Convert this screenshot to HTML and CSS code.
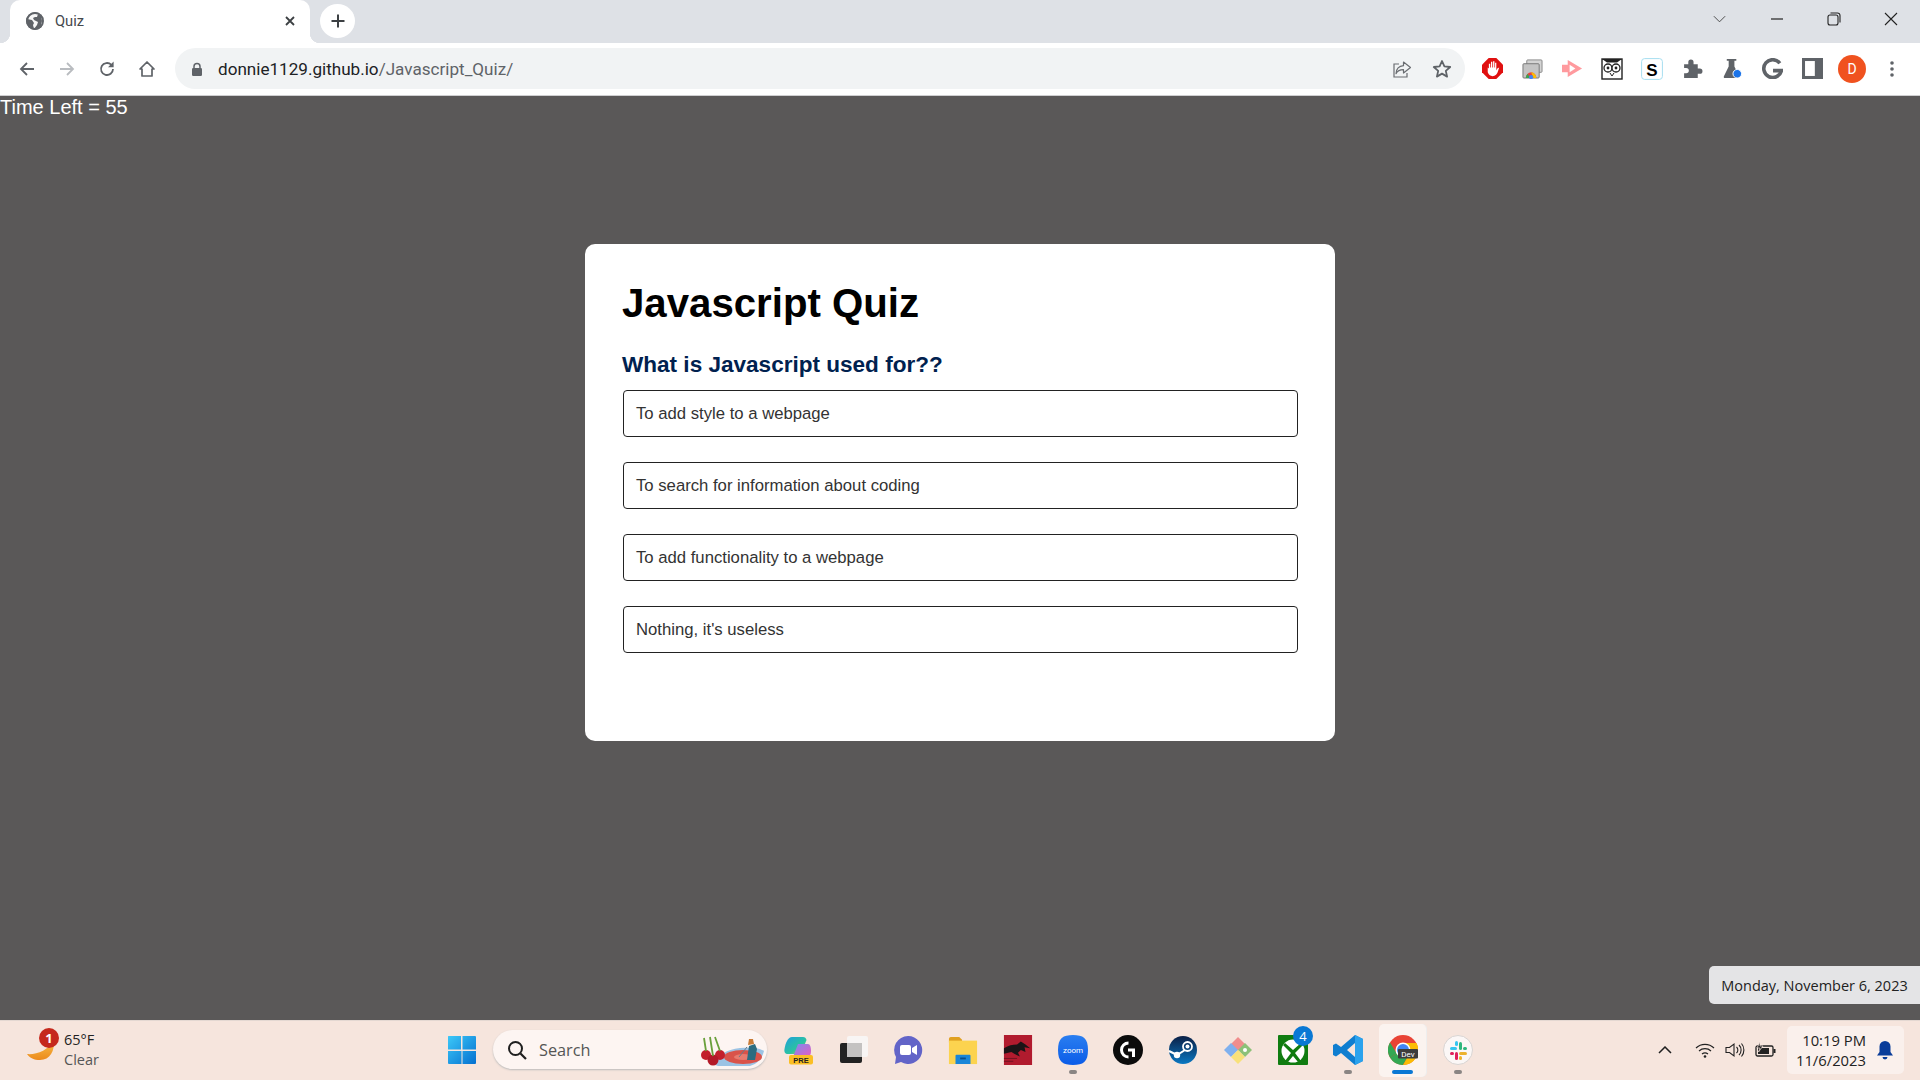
FILE: index.html
```html
<!DOCTYPE html>
<html lang="en">
<head>
<meta charset="utf-8">
<title>Quiz</title>
<link rel="stylesheet" href="styles.css">
</head>
<body>
<div class="screen">
  <header class="tabstrip">
    <div class="tab">
      <svg class="favicon" viewBox="0 0 18 18"><circle cx="9" cy="9" r="9" fill="#5f6368"/><path d="M1 7l5 1 2 3-1 2 1 4 3-4 1-3-4-2-1-2 2-1 2 0 1-3 3 2 1 5-1 4 3-1 1-4-5-6-5-1-5 2z" fill="#fff" opacity=".95"/><circle cx="9" cy="9" r="8" fill="none" stroke="#5f6368" stroke-width="2"/></svg>
      <span class="tab-title">Quiz</span>
      <svg class="tab-close" viewBox="0 0 12 12"><path d="M2 2l8 8M10 2l-8 8" stroke="#3c4043" stroke-width="1.8" fill="none"/></svg>
    </div>
    <div class="newtab"><svg viewBox="0 0 16 16"><path d="M8 1.5v13M1.5 8h13" stroke="#3c4043" stroke-width="2" fill="none"/></svg></div>
    <div class="wincontrols">
      <span class="win win-chev"><svg viewBox="0 0 16 10"><path d="M2 2l6 6 6-6" stroke="#444" stroke-width="1" fill="none"/></svg></span>
      <span class="win"><svg viewBox="0 0 14 14"><path d="M1 7h12" stroke="#222" stroke-width="1.2"/></svg></span>
      <span class="win"><svg viewBox="0 0 14 14"><rect x="1" y="3" width="10" height="10" rx="2" fill="none" stroke="#222" stroke-width="1.1"/><path d="M3.5 1h7a2.5 2.5 0 0 1 2.5 2.5v7" fill="none" stroke="#222" stroke-width="1.1"/></svg></span>
      <span class="win"><svg viewBox="0 0 14 14"><path d="M1 1l12 12M13 1L1 13" stroke="#222" stroke-width="1.1"/></svg></span>
    </div>
  </header>

  <nav class="toolbar">
    <div class="navbtns">
      <span class="navbtn"><svg viewBox="0 0 18 18"><path d="M16 9H3M9 3L3 9l6 6" stroke="#5f6368" stroke-width="1.8" fill="none"/></svg></span>
      <span class="navbtn"><svg viewBox="0 0 18 18"><path d="M2 9h13M9 3l6 6-6 6" stroke="#b9bcc0" stroke-width="1.8" fill="none"/></svg></span>
      <span class="navbtn"><svg viewBox="0 0 18 18"><path d="M15 9a6 6 0 1 1-1.8-4.3" stroke="#5f6368" stroke-width="1.8" fill="none"/><path d="M15.6 1.6v5.6H10z" fill="#5f6368"/></svg></span>
      <span class="navbtn"><svg viewBox="0 0 18 18"><path d="M9 2L2 9h2v7h10V9h2z" stroke="#5f6368" stroke-width="1.7" fill="none" stroke-linejoin="round"/></svg></span>
    </div>
    <div class="omnibox">
      <svg class="lock" viewBox="0 0 12 14"><path d="M3 6V4.5a3 3 0 0 1 6 0V6" stroke="#5f6368" stroke-width="1.5" fill="none"/><rect x="1" y="6" width="10" height="8" rx="1.2" fill="#5f6368"/></svg>
      <span class="url">donnie1129.github.io<span class="url-path">/Javascript_Quiz/</span></span>
      <svg class="omni-icon share" viewBox="0 0 20 20"><path d="M7 5H2v13h13v-4" stroke="#6a6d71" stroke-width="1.2" fill="none"/><path d="M11.5 3l7 5.500-7 5.500v-3.300c-3.500 0-6 1-7.500 4 .3-4.500 3-7.700 7.500-8z" stroke="#6a6d71" stroke-width="1.200" fill="none" stroke-linejoin="round"/></svg>
      <svg class="omni-icon star" viewBox="0 0 20 20"><path d="M10 2l2.400 5.400 5.800.6-4.400 3.900 1.300 5.700-5.100-3-5.100 3 1.300-5.700L1.800 8l5.800-.6z" stroke="#5f6368" stroke-width="1.800" fill="none" stroke-linejoin="round"/></svg>
    </div>
    <div class="extensions">
      <span class="ext"><svg viewBox="0 0 22 22"><path d="M7 0h8l7 7v8l-7 7H7l-7-7V7z" fill="#e01010"/><path d="M6 10v5c1 3 3 4 5 4 3 0 5-2 6-6l1-3-2 1-1 2V5h-1.300v5h-.7V3.500h-1.400V10h-.8V4h-1.400v6h-.8V6H7.200v5z" fill="#fff"/></svg></span>
      <span class="ext"><svg viewBox="0 0 22 22"><rect x="5" y="2" width="16" height="13" rx="1" fill="#d4d4d4" stroke="#888"/><rect x="1" y="6" width="17" height="15" rx="1" fill="#c4c4c4" stroke="#777"/><path d="M4 21a5.500 6 0 0 1 11 0z" fill="#e8453c"/><path d="M9.500 15a5.500 6 0 0 1 5.500 6h-3z" fill="#fbbc05"/><path d="M4 21a5.500 6 0 0 1 2-4.500l2 4.500z" fill="#34a853"/><circle cx="9.500" cy="20" r="2.200" fill="#4285f4"/></svg></span>
      <span class="ext"><svg viewBox="0 0 22 22"><path d="M0 7h6V2l15 9-15 9v-5H0z" fill="#ff9a9e"/><path d="M8 7v8l6-4z" fill="#fff"/></svg></span>
      <span class="ext ext-big"><svg viewBox="0 0 22 22"><rect x="1" y="1" width="20" height="20" fill="#fff" stroke="#222" stroke-width="1.400"/><path d="M1 1l5 3.500h10l5-3.500" fill="#222"/><circle cx="7" cy="10" r="4" fill="#fff" stroke="#222" stroke-width="1.300"/><circle cx="15" cy="10" r="4" fill="#fff" stroke="#222" stroke-width="1.300"/><circle cx="7" cy="10" r="1.400" fill="#222"/><circle cx="15" cy="10" r="1.400" fill="#222"/><path d="M9 15l2 3 2-3" stroke="#222" fill="none"/></svg></span>
      <span class="ext ext-big"><svg viewBox="0 0 22 22"><rect x=".6" y=".6" width="20.800" height="20.800" rx="3" fill="#fff" stroke="#a6def0"/><text x="11" y="17.500" class="ext-s">S</text></svg></span>
      <span class="ext"><svg viewBox="0 0 20 20"><path d="M2 6h4V4a2.500 2.500 0 0 1 5 0v2h4v4h2a2.500 2.500 0 0 1 0 5h-2v4H2v-4.500h2a2.500 2.500 0 0 0 0-5H2z" fill="#5f6368"/></svg></span>
      <span class="ext"><svg viewBox="0 0 22 22"><path d="M5 1h10v2h-2v6l5 10c.5 1-.2 2-1 2H3c-1 0-1.500-1-1-2l5-10V3H5z" fill="#5f6368"/><circle cx="16" cy="16.500" r="4.500" fill="#1a73e8" stroke="#fff"/></svg></span>
      <span class="ext"><svg viewBox="0 0 20 20"><path d="M17 5A8.500 8.500 0 1 0 18.500 12H10.500" stroke="#5f6368" stroke-width="3.400" fill="none"/></svg></span>
      <span class="ext"><svg viewBox="0 0 18 18"><rect x="1.300" y="1.300" width="15.400" height="15.400" fill="none" stroke="#5f6368" stroke-width="2.600"/><rect x="11" y="1" width="6" height="16" fill="#5f6368"/></svg></span>
      <span class="ext"><span class="avatar">D</span></span>
      <span class="ext"><svg viewBox="0 0 4 18" class="dots"><circle cx="2" cy="3" r="1.800" fill="#5f6368"/><circle cx="2" cy="9" r="1.800" fill="#5f6368"/><circle cx="2" cy="15" r="1.800" fill="#5f6368"/></svg></span>
    </div>
  </nav>

  <main class="page">
    <div class="timer">Time Left = 55</div>
    <section class="card">
      <h1 class="card-title">Javascript Quiz</h1>
      <h2 class="question">What is Javascript used for??</h2>
      <div class="answers">
        <button class="answer">To add style to a webpage</button>
        <button class="answer">To search for information about coding</button>
        <button class="answer">To add functionality to a webpage</button>
        <button class="answer">Nothing, it's useless</button>
      </div>
    </section>
    <div class="date-tip">Monday, November 6, 2023</div>
  </main>

  <footer class="taskbar">
    <div class="weather">
      <span class="weather-icon">
        <svg viewBox="0 0 30 30" width="30" height="30"><defs><linearGradient id="moon" x1="0" y1="0" x2="0" y2="1"><stop offset="0" stop-color="#f8c24c"/><stop offset="1" stop-color="#ec8a1c"/></linearGradient></defs><path d="M28 3c1 12-4 21-14 21-6 0-10-2-13-6 8 1 22-3 27-15z" fill="url(#moon)"/></svg>
        <span class="weather-badge">1</span>
      </span>
      <span class="weather-text"><span class="temp">65°F</span><span class="cond">Clear</span></span>
    </div>
    <div class="taskcenter">
      <span class="cell"><svg viewBox="0 0 30 30" width="30" height="30"><defs><linearGradient id="w" x1="0" y1="0" x2="1" y2="1"><stop offset="0" stop-color="#3cc8f8"/><stop offset="1" stop-color="#0470d0"/></linearGradient></defs><path d="M1 1.500A.5.500 0 0 1 1.500 1H14v13.500H1zM15.500 1H28a1 1 0 0 1 1 1v12.500H15.500zM1 16h13.500v13H2a1 1 0 0 1-1-1zM15.500 16H29v12a1 1 0 0 1-1 1H15.500z" fill="url(#w)"/></svg></span>
      <div class="search">
        <svg class="search-icon" viewBox="0 0 20 20"><circle cx="8.500" cy="8.500" r="6.500" fill="none" stroke="#1f1f1f" stroke-width="2"/><path d="M13.500 13.500L19 19" stroke="#1f1f1f" stroke-width="2.200"/></svg>
        <span class="search-text">Search</span>
        <svg class="search-art" viewBox="0 0 64 34"><path d="M10 30c8-6 16-14 30-15 12-1 20 0 24 3-2 8-7 13-14 15H18z" fill="#9cc3e4"/><ellipse cx="43" cy="24" rx="19" ry="7" fill="#d9534a"/><ellipse cx="43" cy="24" rx="9" ry="3" fill="#e77b6f"/><path d="M47 27l2-14 6-2 2 5-2 11z" fill="#2b6c80"/><path d="M48 12l1-6 4 0 1 5z" fill="#c97b36"/><path d="M47 14l-8 10" stroke="#6b7b8a" stroke-width="1"/><circle cx="6" cy="22" r="5" fill="#c3202c"/><circle cx="20" cy="22" r="5" fill="#c3202c"/><circle cx="13" cy="27" r="5.500" fill="#b31a28"/><path d="M6 18L4 5M13 23l-3-19M20 18L15 4" stroke="#6aa03c" stroke-width="1.800" fill="none"/></svg>
      </div>
      <span class="cell"><svg viewBox="0 0 30 30" width="30" height="30"><defs><linearGradient id="cp1" x1="0" y1="0" x2="1" y2="1"><stop offset="0" stop-color="#1f9ede"/><stop offset=".6" stop-color="#2bc3a0"/><stop offset="1" stop-color="#e8b84a"/></linearGradient><linearGradient id="cp2" x1="0" y1="0" x2="1" y2="1"><stop offset="0" stop-color="#7a8cf0"/><stop offset="1" stop-color="#e85cc0"/></linearGradient></defs><path d="M9 2h11c2 0 3 1 3.500 3L18 19H5c-3 0-4-2-3.500-5C2.500 8 5 2 9 2z" fill="url(#cp1)"/><path d="M15 9h10c2 0 3 3 3 7 0 3-1 6-4 6H10z" fill="url(#cp2)"/><rect x="6" y="20" width="24" height="9.500" rx="2" fill="#fbbf24"/><text x="18" y="28" class="pre">PRE</text></svg></span>
      <span class="cell"><svg viewBox="0 0 30 30" width="30" height="30"><rect x="9" y="1" width="21" height="21" rx="2" fill="#f8f5f4"/><rect x="2" y="8" width="22" height="20" rx="2" fill="#222"/><rect x="9" y="8" width="15" height="14" fill="#c4c2c1"/></svg></span>
      <span class="cell"><svg viewBox="0 0 30 30" width="30" height="30"><path d="M15 1a14 14 0 1 1-7 26l-6 2 1-7A14 14 0 0 1 15 1z" fill="#6264c8"/><rect x="7" y="10" width="11" height="10" rx="2" fill="#fff"/><path d="M19 13l5-3v10l-5-3z" fill="#fff"/></svg></span>
      <span class="cell"><svg viewBox="0 0 30 32" width="30" height="30"><path d="M0 4a2 2 0 0 1 2-2h9l3 3v3H0z" fill="#e0a020"/><path d="M0 6h30v25H0z" fill="#fcd34f"/><path d="M8 21h14a1 1 0 0 1 1 1v9H7v-9a1 1 0 0 1 1-1z" fill="#1a86d8"/><path d="M12 25h6" stroke="#0b4f8c" stroke-width="2"/></svg></span>
      <span class="cell"><svg viewBox="0 0 30 32" width="30" height="30"><rect width="30" height="32" fill="#b11b2e"/><path d="M0 14c5-3 9-4 14-4l4-3 5 3 5 4-6-1 1 5-5-2-3 3 2 4-6-3-3-2-8 2z" fill="#1a1416"/><path d="M0 25h14M0 28h10" stroke="#6e1220"/></svg></span>
      <span class="cell"><svg viewBox="0 0 30 30" width="30" height="30"><defs><linearGradient id="zm" x1="0" y1="0" x2="0" y2="1"><stop offset="0" stop-color="#2a7ef0"/><stop offset="1" stop-color="#0b5ce8"/></linearGradient></defs><path d="M15 0c10 0 15 3 15 15s-5 15-15 15S0 27 0 15 5 0 15 0z" fill="url(#zm)"/><text x="15" y="18" class="zoomtxt">zoom</text></svg><i class="run"></i></span>
      <span class="cell"><svg viewBox="0 0 30 30" width="30" height="30"><circle cx="15" cy="15" r="15" fill="#0b0b0b"/><path d="M15.500 8a7 7 0 0 0 0 14" fill="none" stroke="#fff" stroke-width="3"/><path d="M15 13.500h7v8.500h-3v-5.500h-4z" fill="#fff"/></svg></span>
      <span class="cell"><svg viewBox="0 0 30 30" width="30" height="30"><defs><linearGradient id="st" x1="0" y1="0" x2="0" y2="1"><stop offset="0" stop-color="#0b1f45"/><stop offset="1" stop-color="#0a78c2"/></linearGradient></defs><circle cx="15" cy="15" r="14" fill="url(#st)"/><circle cx="19.500" cy="11.500" r="4.500" fill="none" stroke="#fff" stroke-width="1.800"/><circle cx="19.500" cy="11.500" r="2" fill="#fff"/><circle cx="9" cy="20" r="3.200" fill="#fff"/><path d="M1 16l8 4 8-5" stroke="#fff" stroke-width="2" fill="none"/></svg></span>
      <span class="cell"><svg viewBox="0 0 30 30" width="30" height="30"><path d="M8 9l7-7 7 7-7 7z" fill="#f08d8d"/><path d="M1 15l7-7 7 7-7 7z" fill="#7fb0ee"/><path d="M15 15l7-7 7 7-7 7z" fill="#8cc178"/><path d="M8 22l7-7 7 7-7 7z" fill="#f8e17a"/><circle cx="22" cy="15" r="2" fill="#fff"/></svg></span>
      <span class="cell"><svg viewBox="0 0 30 30" width="30" height="30"><rect width="30" height="30" rx="1" fill="#107c10"/><circle cx="15" cy="16" r="11.500" fill="#fff"/><path d="M7 8l8 7 8-7 2 2-8 8 6 8-3 1-5-6-5 6-3-1 6-8-8-8z" fill="#107c10"/></svg><span class="xbox-badge">4</span></span>
      <span class="cell"><svg viewBox="0 0 30 30" width="30" height="30"><path d="M22 0l8 4v22l-8 4-14-12-5 3.500L0 20v-10l3-1.500L8 12zM22 8l-8 7 8 7z" fill="#0f7ed0" fill-rule="evenodd"/><path d="M22 0l8 4v22l-8 4z" fill="#2ba2ed"/></svg><i class="run"></i></span>
      <span class="cell active"><svg viewBox="0 0 30 30" width="30" height="30"><circle cx="15" cy="15" r="15" fill="#e94335"/><path d="M15 15L2 22.500A15 15 0 0 1 2 7.500L9 19z" fill="#33a853"/><path d="M15 15L2 22.500A15 15 0 0 0 15 30l7-12z" fill="#33a853"/><path d="M15 8h13.500A15 15 0 0 1 15 30l7-12z" fill="#fbbc04"/><circle cx="15" cy="15" r="7.500" fill="#fff"/><circle cx="15" cy="15" r="6" fill="#4285f4"/><rect x="10" y="14" width="20" height="9.500" rx="1" fill="#3c3c3c"/><text x="20" y="22" class="devtxt">Dev</text></svg><i class="run run-active"></i></span>
      <span class="cell"><svg viewBox="0 0 30 30" width="30" height="30"><circle cx="15" cy="15" r="14.500" fill="#fbf7f6" stroke="#d8d4d2"/><rect x="7" y="12" width="7" height="3" rx="1.500" fill="#36c5f0"/><rect x="12" y="6" width="3" height="5" rx="1.500" fill="#36c5f0"/><rect x="16" y="7" width="3" height="8" rx="1.500" fill="#2eb67d"/><rect x="20" y="12" width="4" height="3" rx="1.500" fill="#2eb67d"/><rect x="16" y="17" width="8" height="3" rx="1.500" fill="#ecb22e"/><rect x="16" y="21" width="3" height="4" rx="1.500" fill="#ecb22e"/><rect x="12" y="17" width="3" height="8" rx="1.500" fill="#e01e5a"/><rect x="7" y="17" width="4" height="3" rx="1.500" fill="#e01e5a"/></svg><i class="run"></i></span>
    </div>
    <div class="tray">
      <svg class="tray-chev" viewBox="0 0 14 8"><path d="M1 7l6-6 6 6" stroke="#1f1f1f" stroke-width="1.500" fill="none"/></svg>
      <svg class="tray-wifi" viewBox="0 0 20 16"><path d="M1 6a13 13 0 0 1 18 0M4 9a9 9 0 0 1 12 0M7 12a5 5 0 0 1 6 0" stroke="#222" stroke-width="1.200" fill="none"/><circle cx="10" cy="14.500" r="1.300" fill="#222"/></svg>
      <svg class="tray-vol" viewBox="0 0 20 16"><path d="M1 5.500h3.500L9 2v12L4.500 10.500H1z" stroke="#222" stroke-width="1.100" fill="none"/><path d="M11.500 5a4 4 0 0 1 0 6M14 3a7 7 0 0 1 0 10M16.500 1.500a10 10 0 0 1 0 13" stroke="#222" stroke-width="1.100" fill="none"/></svg>
      <svg class="tray-bat" viewBox="0 0 22 16"><rect x="1" y="4" width="17" height="10" rx="1.500" fill="none" stroke="#222" stroke-width="1.300"/><rect x="3" y="6" width="11" height="6" fill="#222"/><rect x="18.500" y="7" width="2" height="4" fill="#222"/><path d="M5 0L2 6h3L3.500 10 8 4H5z" fill="#222" stroke="#f7e5de" stroke-width=".7"/></svg>
      <div class="clock">
        <span class="clock-text"><span>10:19 PM</span><span>11/6/2023</span></span>
        <svg class="bell" viewBox="0 0 18 20"><path d="M9 1a5.500 5.500 0 0 1 5.500 5.500V12l2.500 3.500H1L3.500 12V6.500A5.500 5.500 0 0 1 9 1z" fill="#0a3d9a"/><path d="M6.500 17a2.500 2.500 0 0 0 5 0z" fill="#0a3d9a"/></svg>
      </div>
    </div>
  </footer>
</div>
</body>
</html>
```

FILE: styles.css
```css
* { box-sizing: border-box; }
html, body { margin: 0; padding: 0; height: 100%; overflow: hidden; }
body { font-family: "Liberation Sans", Arial, sans-serif; }
.screen { width: 1920px; height: 1080px; display: flex; flex-direction: column; }

/* tab strip */
.tabstrip { height: 43px; background: #dee1e6; display: flex; align-items: flex-end; padding-left: 10px; flex: none; }
.tab { position: relative; width: 300px; height: 43px; background: #fff; border-radius: 10px 10px 0 0; display: flex; align-items: center; padding: 0 12px 1px 16px; }
.tab::before, .tab::after { content: ""; position: absolute; bottom: 0; width: 10px; height: 10px; }
.tab::before { left: -10px; background: radial-gradient(circle at 0 0, transparent 10px, #fff 10.500px); }
.tab::after { right: -10px; background: radial-gradient(circle at 100% 0, transparent 10px, #fff 10.500px); }
.favicon { width: 18px; height: 18px; flex: none; }
.tab-title { margin-left: 11px; font: 14.700px "Roboto", sans-serif; color: #45494d; flex: 1; }
.tab-close { width: 12px; height: 12px; flex: none; margin-right: 2px; }
.newtab { width: 35px; height: 34px; margin: 0 0 5px 10px; border-radius: 50%; background: #fff; display: flex; align-items: center; justify-content: center; }
.newtab svg { width: 16px; height: 16px; }
.wincontrols { margin-left: auto; align-self: stretch; display: flex; align-items: center; padding: 0 1px 6px 0; }
.win { width: 57px; height: 37px; display: flex; align-items: center; justify-content: center; }
.win svg { width: 14px; height: 14px; }
.win-chev svg { width: 15px; height: 10px; }

/* toolbar */
.toolbar { height: 53px; background: #fff; border-bottom: 1px solid #cfcfd1; display: flex; align-items: center; padding: 0 7px 1px 7px; flex: none; }
.navbtns { display: flex; }
.navbtn { width: 40px; height: 36px; display: flex; align-items: center; justify-content: center; }
.navbtn svg { width: 18px; height: 18px; }
.omnibox { width: 1290px; height: 41px; margin-left: 8px; background: #f1f3f4; border-radius: 21px; display: flex; align-items: center; padding: 0 13px 0 16px; }
.lock { width: 12px; height: 14px; flex: none; }
.url { margin-left: 15px; font: 17.100px "Roboto", sans-serif; color: #202124; flex: 1; white-space: nowrap; }
.url-path { color: #5f6368; }
.omni-icon { width: 20px; height: 20px; flex: none; }
.share { margin-right: 20px; }
.extensions { display: flex; margin-left: 7px; margin-right: 1px; }
.ext { width: 40px; height: 36px; display: flex; align-items: center; justify-content: center; }
.ext svg { width: 21px; height: 21px; }
.ext-big svg { width: 22px; height: 22px; }
.ext .dots { width: 4px; height: 18px; }
.ext-s { font: bold 17px "Liberation Sans", sans-serif; text-anchor: middle; fill: #000; }
.avatar { width: 28px; height: 28px; border-radius: 50%; background: #f0521f; color: #fff; font: 14px "Roboto", sans-serif; display: flex; align-items: center; justify-content: center; }

/* page */
.page { position: relative; flex: 1; background: #5a5858; display: flex; flex-direction: column; align-items: center; }
.timer { align-self: flex-start; color: #fff; font-size: 20px; line-height: 23px; }
.card { width: 750px; height: 497px; margin-top: 125px; padding: 37px 37px 37px 38px; background: #fff; border-radius: 10px; }
.card-title { margin: 0 0 0 -1px; font-size: 40.200px; line-height: 46px; color: #000; font-weight: bold; }
.question { margin: 24px 0 0 -1px; font-size: 22.550px; line-height: 28px; color: #00214f; font-weight: bold; }
.answers { margin-top: 11px; display: flex; flex-direction: column; gap: 25px; }
.answer { height: 47px; padding: 0 12px; text-align: left; background: #fff; border: 1px solid #222; border-radius: 4px; color: #333; font: 16.700px "Liberation Sans", sans-serif; }
.date-tip { position: absolute; right: 0; bottom: 16px; width: 211px; height: 38px; background: #e4e4e6; border-radius: 5px 0 0 5px; display: flex; align-items: center; justify-content: center; font: 14.500px "Open Sans", sans-serif; color: #222; }

/* taskbar */
.taskbar { height: 60px; background: #f6e5dd; border-top: 1px solid #e4d8d2; display: flex; align-items: center; flex: none; padding: 0 0 2px 26px; position: relative; }
.weather { width: 408px; display: flex; align-items: center; }
.weather-icon { position: relative; width: 30px; height: 30px; display: block; margin-top: 2px; }
.weather-badge { position: absolute; left: 13px; top: -8px; width: 20px; height: 20px; border-radius: 50%; background: #c5281c; color: #fff; font: bold 13px "Open Sans", sans-serif; display: flex; align-items: center; justify-content: center; }
.weather-text { margin-left: 8px; display: flex; flex-direction: column; font: 14.500px/20px "Open Sans", sans-serif; color: #222; }
.cond { color: #555; }
.taskcenter { display: flex; align-items: center; }
.cell { position: relative; width: 55px; height: 54px; display: flex; align-items: center; justify-content: center; }
.cell svg { flex: none; position: relative; }
.run { position: absolute; left: 24px; bottom: 3px; width: 8px; height: 4px; border-radius: 2px; background: #8a8583; }
.run-active { left: 17px; width: 21px; background: #0a78d4; }
.active::before { content: ""; position: absolute; left: 4px; right: 4px; top: 1px; bottom: 0; background: #fbf3ef; border-radius: 5px; box-shadow: 1px 0 0 #eee; }
.search { width: 274px; height: 39px; margin: 0 3px 0 4px; border-radius: 20px; background: #fdf5f2; box-shadow: 0 1px 2px #bbb; display: flex; align-items: center; padding-left: 14px; }
.search-icon { width: 20px; height: 20px; flex: none; }
.search-text { margin-left: 12px; font: 16.300px "Open Sans", sans-serif; color: #555; flex: 1; }
.search-art { width: 64px; height: 34px; flex: none; margin-right: 3px; }
.pre { font: bold 7.500px "Liberation Sans", sans-serif; text-anchor: middle; fill: #222; }
.zoomtxt { font: 8px "Roboto", sans-serif; text-anchor: middle; fill: #fff; }
.devtxt { font: 8px "Roboto", sans-serif; text-anchor: middle; fill: #fff; }
.xbox-badge { position: absolute; left: 28px; top: 3px; width: 20px; height: 20px; border-radius: 50%; background: #0a78d4; color: #fff; font: 13px "Open Sans", sans-serif; display: flex; align-items: center; justify-content: center; }
.tray { margin-left: auto; display: flex; align-items: center; }
.tray-chev { width: 14px; height: 8px; margin-right: 23px; }
.tray-wifi { width: 20px; height: 16px; margin-right: 10px; }
.tray-vol { width: 20px; height: 16px; margin-right: 10px; }
.tray-bat { width: 22px; height: 16px; margin-right: 10px; }
.clock { width: 117px; height: 48px; margin-right: 16px; padding-right: 10px; background: #faf0ec; border-radius: 5px; display: flex; align-items: center; justify-content: flex-end; }
.clock-text { display: flex; flex-direction: column; align-items: flex-end; font: 14.800px/20px "Open Sans", sans-serif; color: #222; margin-right: 10px; }
.bell { width: 18px; height: 20px; flex: none; }
```
